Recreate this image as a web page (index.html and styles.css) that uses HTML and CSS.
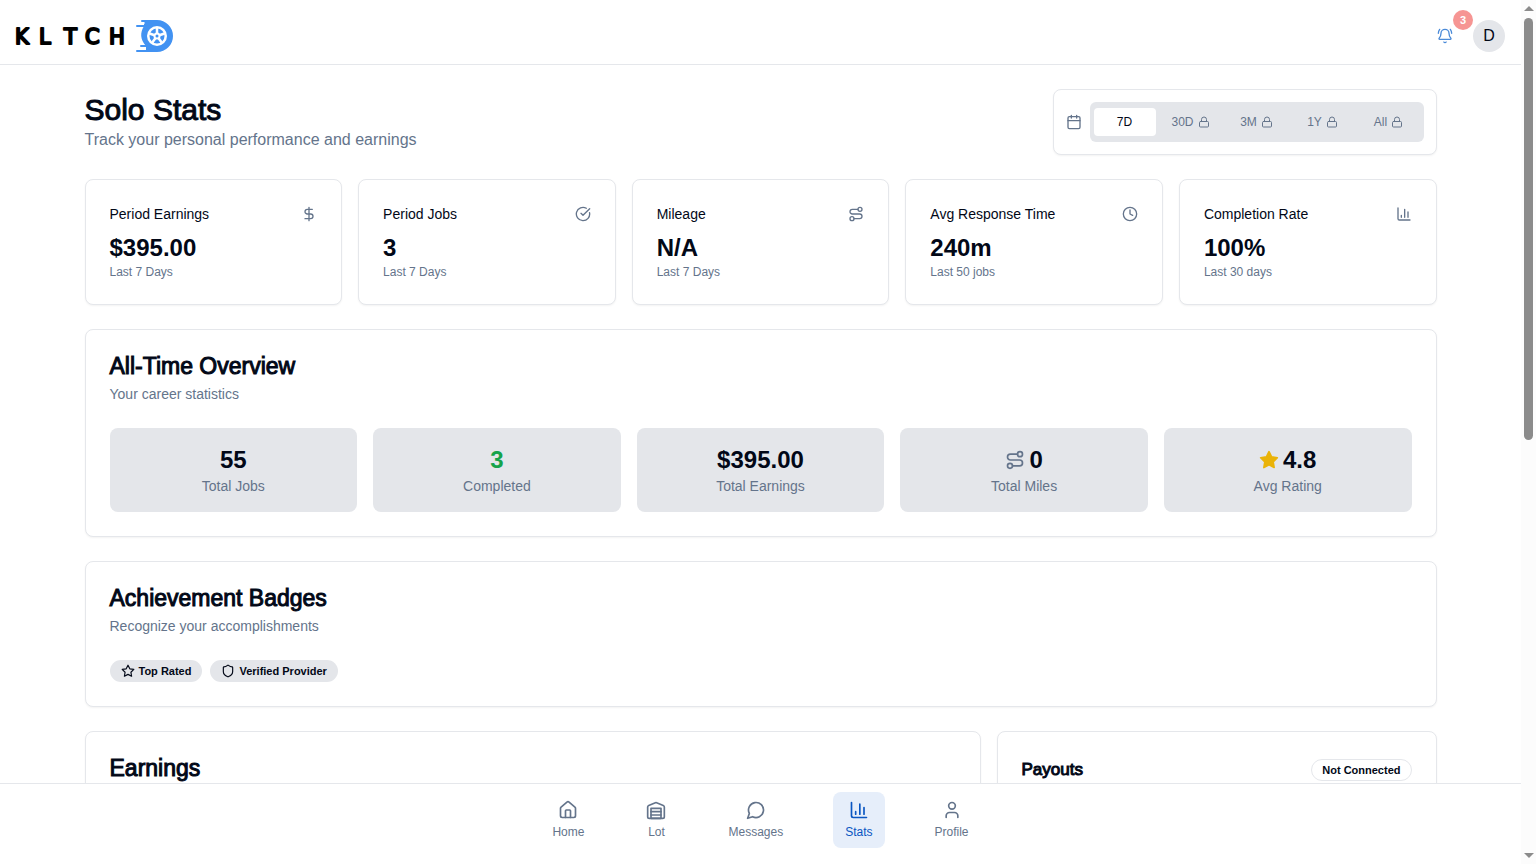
FILE: index.html
```html
<!DOCTYPE html>
<html lang="en">
<head>
    <meta charset="UTF-8">
    <meta name="viewport" content="width=device-width, initial-scale=1.0">
    <title>Solo Stats</title>
    <link rel="stylesheet" href="styles.css">
</head>
<body>
    <!-- shared icons -->
    <svg class="sprite" aria-hidden="true">
        <symbol id="dollar" viewBox="0 0 24 24"><path d="M12 2v20M17 5H9.5a3.5 3.5 0 0 0 0 7h5a3.5 3.5 0 0 1 0 7H6"/></symbol>
        <symbol id="check" viewBox="0 0 24 24"><path d="M21.8 10A10 10 0 1 1 17 3.34M9 11l3 3L22 4"/></symbol>
        <symbol id="route" viewBox="0 0 24 24"><circle cx="6" cy="19" r="3"/><path d="M9 19h8.5a3.5 3.5 0 0 0 0-7h-11a3.5 3.5 0 0 1 0-7H15"/><circle cx="18" cy="5" r="3"/></symbol>
        <symbol id="clock" viewBox="0 0 24 24"><circle cx="12" cy="12" r="10"/><path d="M12 6v6l4 2"/></symbol>
        <symbol id="chart" viewBox="0 0 24 24"><path d="M3 3v16a2 2 0 0 0 2 2h16M18 17V9M13 17V5M8 17v-3"/></symbol>
        <symbol id="lock" viewBox="0 0 24 24"><rect x="3" y="11" width="18" height="11" rx="2"/><path d="M7 11V7a5 5 0 0 1 10 0v4"/></symbol>
        <symbol id="calendar" viewBox="0 0 24 24"><path d="M8 2v4M16 2v4M3 10h18"/><rect x="3" y="4" width="18" height="18" rx="2"/></symbol>
        <symbol id="star" viewBox="0 0 24 24"><path d="M12 2l3.09 6.26L22 9.27l-5 4.87 1.18 6.88L12 17.77l-6.18 3.25L7 14.14 2 9.27l6.91-1.01z"/></symbol>
        <symbol id="shield" viewBox="0 0 24 24"><path d="M20 13c0 5-3.5 7.5-7.66 8.95a1 1 0 0 1-.67-.01C7.5 20.5 4 18 4 13V6a1 1 0 0 1 1-1c2 0 4.5-1.2 6.24-2.72a1.17 1.17 0 0 1 1.52 0C14.51 3.81 17 5 19 5a1 1 0 0 1 1 1z"/></symbol>
        <symbol id="bell" viewBox="0 0 24 24"><path d="M10.27 21a2 2 0 0 0 3.46 0M22 8c0-2.3-.8-4.3-2-6M4 2C2.8 3.7 2 5.7 2 8M3.26 15.33A1 1 0 0 0 4 17h16a1 1 0 0 0 .74-1.67C19.41 13.96 18 12.5 18 8A6 6 0 0 0 6 8c0 4.5-1.41 5.96-2.74 7.33"/></symbol>
        <symbol id="home" viewBox="0 0 24 24"><path d="M15 21v-8a1 1 0 0 0-1-1h-4a1 1 0 0 0-1 1v8"/><path d="M3 10a2 2 0 0 1 .71-1.53l7-6a2 2 0 0 1 2.58 0l7 6A2 2 0 0 1 21 10v9a2 2 0 0 1-2 2H5a2 2 0 0 1-2-2z"/></symbol>
        <symbol id="lot" viewBox="0 0 24 24"><path d="M22 8.35V20a2 2 0 0 1-2 2H4a2 2 0 0 1-2-2V8.35A2 2 0 0 1 3.26 6.5l8-3.2a2 2 0 0 1 1.48 0l8 3.2A2 2 0 0 1 22 8.35zM6 18h12M6 14h12"/><path d="M6 22V10h12v12z"/></symbol>
        <symbol id="message" viewBox="0 0 24 24"><path d="M7.9 20A9 9 0 1 0 4 16.1L2 22z"/></symbol>
        <symbol id="user" viewBox="0 0 24 24"><path d="M19 21v-2a4 4 0 0 0-4-4H9a4 4 0 0 0-4 4v2"/><circle cx="12" cy="7" r="4"/></symbol>
    </svg>

    <div class="app">
        <header class="header">
            <a class="logo" href="#" aria-label="KLTCH home">
                <svg width="160" height="36" viewBox="0 0 160 36">
                    <text class="wordmark" x="-1 23 48 69 93" y="26">KLTCH</text>
                    <!-- tire with speed lines -->
                    <path fill="#4292f2" d="M128 2h13a16 16 0 0 1 0 32h-11v-6c-6-7-6-13-2-20z"/>
                    <path stroke="#4292f2" stroke-width="2" stroke-linecap="round" d="M126 3h8M121 8h9M125 28h8M121 33h14"/>
                    <path stroke="#fff" d="M122 5h7M123 30h7"/>
                    <circle cx="141" cy="18" r="10" fill="#fff"/>
                    <circle cx="141" cy="18" r="7.500" fill="#4292f2"/>
                    <circle cx="141" cy="18" r="3.500" fill="#fff"/>
                    <path stroke="#fff" stroke-width="2.500" d="M141 18V10M141 18l7.600-2.500M141 18l4.700 6.500M141 18l-4.700 6.500M141 18l-7.600-2.500"/>
                    <circle cx="141" cy="18" r="1.500" fill="#4292f2"/>
                </svg>
            </a>
            <div class="account">
                <button class="bell" type="button" aria-label="Notifications">
                    <svg class="icon"><use href="#bell"/></svg>
                    <span class="count">3</span>
                </button>
                <button class="avatar" type="button">D</button>
            </div>
        </header>

        <main class="main">
            <div class="container">
                <div class="page-head">
                    <div>
                        <h1>Solo Stats</h1>
                        <p>Track your personal performance and earnings</p>
                    </div>
                    <div class="card range">
                        <svg class="icon"><use href="#calendar"/></svg>
                        <div class="tabs">
                            <button class="tab active" type="button">7D</button>
                            <button class="tab" type="button">30D <svg class="icon"><use href="#lock"/></svg></button>
                            <button class="tab" type="button">3M <svg class="icon"><use href="#lock"/></svg></button>
                            <button class="tab" type="button">1Y <svg class="icon"><use href="#lock"/></svg></button>
                            <button class="tab" type="button">All <svg class="icon"><use href="#lock"/></svg></button>
                        </div>
                    </div>
                </div>

                <div class="grid">
                    <div class="card">
                        <div class="stat-head"><h3>Period Earnings</h3><svg class="icon"><use href="#dollar"/></svg></div>
                        <div class="value">$395.00</div>
                        <p class="note">Last 7 Days</p>
                    </div>
                    <div class="card">
                        <div class="stat-head"><h3>Period Jobs</h3><svg class="icon"><use href="#check"/></svg></div>
                        <div class="value">3</div>
                        <p class="note">Last 7 Days</p>
                    </div>
                    <div class="card">
                        <div class="stat-head"><h3>Mileage</h3><svg class="icon"><use href="#route"/></svg></div>
                        <div class="value">N/A</div>
                        <p class="note">Last 7 Days</p>
                    </div>
                    <div class="card">
                        <div class="stat-head"><h3>Avg Response Time</h3><svg class="icon"><use href="#clock"/></svg></div>
                        <div class="value">240m</div>
                        <p class="note">Last 50 jobs</p>
                    </div>
                    <div class="card">
                        <div class="stat-head"><h3>Completion Rate</h3><svg class="icon"><use href="#chart"/></svg></div>
                        <div class="value">100%</div>
                        <p class="note">Last 30 days</p>
                    </div>
                </div>

                <section class="card">
                    <h2>All-Time Overview</h2>
                    <p class="subtitle">Your career statistics</p>
                    <div class="grid">
                        <div class="tile"><div class="value">55</div><p>Total Jobs</p></div>
                        <div class="tile"><div class="value green">3</div><p>Completed</p></div>
                        <div class="tile"><div class="value">$395.00</div><p>Total Earnings</p></div>
                        <div class="tile"><div class="value"><svg class="icon"><use href="#route"/></svg>0</div><p>Total Miles</p></div>
                        <div class="tile"><div class="value"><svg class="icon gold"><use href="#star"/></svg>4.8</div><p>Avg Rating</p></div>
                    </div>
                </section>

                <section class="card">
                    <h2>Achievement Badges</h2>
                    <p class="subtitle">Recognize your accomplishments</p>
                    <div class="badges">
                        <span class="badge"><svg class="icon"><use href="#star"/></svg>Top Rated</span>
                        <span class="badge"><svg class="icon"><use href="#shield"/></svg>Verified Provider</span>
                    </div>
                </section>

                <div class="bottom-row">
                    <section class="card">
                        <h2>Earnings</h2>
                    </section>
                    <section class="card payouts">
                        <h3>Payouts</h3>
                        <span class="badge outline">Not Connected</span>
                    </section>
                </div>
            </div>
        </main>

        <nav class="nav">
            <a href="#"><svg class="icon"><use href="#home"/></svg>Home</a>
            <a href="#"><svg class="icon"><use href="#lot"/></svg>Lot</a>
            <a href="#"><svg class="icon"><use href="#message"/></svg>Messages</a>
            <a href="#" class="active"><svg class="icon"><use href="#chart"/></svg>Stats</a>
            <a href="#"><svg class="icon"><use href="#user"/></svg>Profile</a>
        </nav>
    </div>

    <div class="scrollbar" aria-hidden="true">
        <span class="arrow up"></span>
        <span class="track"><span class="thumb"></span></span>
        <span class="arrow down"></span>
    </div>
</body>
</html>
```

FILE: styles.css
```css
* {
    box-sizing: border-box;
    margin: 0;
}
body {
    display: flex;
    height: 100vh;
    background-color: #fff;
    color: #020817;
    font-family: "Liberation Sans", Arial, sans-serif;
    font-size: 14px;
    line-height: 20px;
}
button {
    border: none;
    padding: 0;
    font-family: inherit;
    color: inherit;
    cursor: pointer;
}
a {
    color: inherit;
    text-decoration: none;
}
.sprite {
    position: absolute;
    width: 0;
    height: 0;
}
.icon {
    width: 16px;
    height: 16px;
    flex-shrink: 0;
    fill: none;
    stroke: currentColor;
    stroke-width: 2;
    stroke-linecap: round;
    stroke-linejoin: round;
}
.app {
    flex: 1;
    min-width: 0;
    display: flex;
    flex-direction: column;
}

/* header */
.header {
    display: flex;
    justify-content: space-between;
    align-items: center;
    padding: 16px 16px 8px;
    border-bottom: 1px solid #e5e7eb;
}
.logo svg {
    display: block;
    overflow: visible;
}
.wordmark {
    font-family: "DejaVu Sans", sans-serif;
    font-size: 21px;
    fill: #000;
    stroke: #000;
    stroke-width: 2px;
    stroke-linejoin: round;
}
.account {
    display: flex;
    align-items: center;
    gap: 8px;
}
.bell {
    position: relative;
    display: flex;
    justify-content: center;
    align-items: center;
    width: 40px;
    height: 40px;
    background: none;
    color: #4a8ad8;
}
.count {
    position: absolute;
    top: -6px;
    right: -8px;
    width: 20px;
    height: 20px;
    border-radius: 50%;
    background-color: #f69593;
    color: #fff;
    font-size: 11px;
    font-weight: bold;
    line-height: 20px;
}
.avatar {
    width: 32px;
    height: 32px;
    border-radius: 50%;
    background-color: #e4e6ea;
    font-size: 16px;
}

/* content */
.main {
    flex: 1;
    min-height: 0;
    overflow-y: auto;
    scrollbar-width: none;
}
.container {
    display: flex;
    flex-direction: column;
    gap: 24px;
    max-width: 1400px;
    margin: 0 auto;
    padding: 24px;
}
.card {
    padding: 24px;
    border: 1px solid #e5e7eb;
    border-radius: 8px;
    background-color: #fff;
    box-shadow: 0 1px 2px rgba(0, 0, 0, 0.05);
}
.page-head {
    display: flex;
    justify-content: space-between;
    align-items: center;
}
h1 {
    font-size: 30px;
    font-weight: 400;
    line-height: 36px;
    -webkit-text-stroke: 1px;
}
.page-head p {
    color: #64748b;
    font-size: 16px;
    line-height: 24px;
}
.range {
    display: flex;
    align-items: center;
    gap: 8px;
    padding: 12px;
    color: #64748b;
}
.tabs {
    display: grid;
    grid-template-columns: repeat(5, 62px);
    gap: 4px;
    padding: 6px 4px;
    border-radius: 6px;
    background-color: #e4e6ea;
}
.tab {
    display: flex;
    justify-content: center;
    align-items: center;
    gap: 4px;
    height: 28px;
    border-radius: 4px;
    background: none;
    font-size: 12px;
}
.tab .icon {
    width: 12px;
    height: 12px;
}
.tab.active {
    background-color: #fff;
    color: #020817;
}
.grid {
    display: grid;
    grid-template-columns: repeat(5, 1fr);
    gap: 16px;
}
.stat-head {
    display: flex;
    justify-content: space-between;
    align-items: center;
    margin-bottom: 8px;
    color: #64748b;
}
.stat-head h3 {
    color: #020817;
    font-size: 14px;
    font-weight: 400;
}
.value {
    font-size: 24px;
    font-weight: bold;
    line-height: 32px;
}
.note {
    color: #64748b;
    font-size: 12px;
    line-height: 16px;
}
h2 {
    font-size: 23px;
    font-weight: 400;
    line-height: 24px;
    -webkit-text-stroke: 1px;
}
.subtitle {
    margin: 6px 0 24px;
    color: #64748b;
}
.tile {
    padding: 16px;
    border-radius: 8px;
    background-color: #e4e6ea;
    color: #64748b;
    text-align: center;
}
.tile .value {
    display: flex;
    justify-content: center;
    align-items: center;
    gap: 4px;
    color: #020817;
}
.tile .value.green {
    color: #16a34a;
}
.tile .icon {
    width: 20px;
    height: 20px;
    color: #64748b;
}
.tile .icon.gold {
    color: #eab308;
    fill: #eab308;
}
.badges {
    display: flex;
    gap: 8px;
}
.badge {
    display: flex;
    align-items: center;
    gap: 4px;
    padding: 2px 10px;
    border: 1px solid transparent;
    border-radius: 11px;
    background-color: #e4e6ea;
    font-size: 11px;
    font-weight: bold;
    line-height: 16px;
}
.badge .icon {
    width: 14px;
    height: 14px;
}
.badge.outline {
    border-color: #e5e7eb;
    background-color: #fff;
}
.bottom-row {
    display: grid;
    grid-template-columns: repeat(3, 1fr);
    gap: 16px;
}
.bottom-row .card:first-child {
    grid-column: span 2;
}
.payouts {
    display: flex;
    justify-content: space-between;
    align-items: flex-start;
}
.payouts h3 {
    font-size: 17px;
    font-weight: 400;
    line-height: 28px;
    -webkit-text-stroke: 1px;
}
.payouts .badge {
    margin-top: 3px;
}

/* bottom navigation */
.nav {
    display: flex;
    justify-content: center;
    gap: 38px;
    padding: 8px 0 16px;
    border-top: 1px solid #e5e7eb;
    color: #64748b;
}
.nav a {
    display: flex;
    flex-direction: column;
    align-items: center;
    gap: 4px;
    padding: 8px 12px;
    border-radius: 8px;
    font-size: 12px;
    line-height: 16px;
}
.nav .icon {
    width: 20px;
    height: 20px;
}
.nav a.active {
    background-color: #e6eefa;
    color: #0a56c2;
}

/* scrollbar */
.scrollbar {
    display: flex;
    flex-direction: column;
    align-items: center;
    width: 15px;
    padding: 6px 0;
    background-color: #fcfcfc;
}
.arrow {
    border: 5px solid transparent;
}
.arrow.up {
    border-top: none;
    border-bottom-color: #8b8b8b;
}
.arrow.down {
    border-bottom: none;
    border-top-color: #8b8b8b;
}
.track {
    flex: 1;
    width: 9px;
    padding: 7px 0;
}
.thumb {
    display: block;
    height: 51%;
    border-radius: 5px;
    background-color: #8b8b8b;
}
```
